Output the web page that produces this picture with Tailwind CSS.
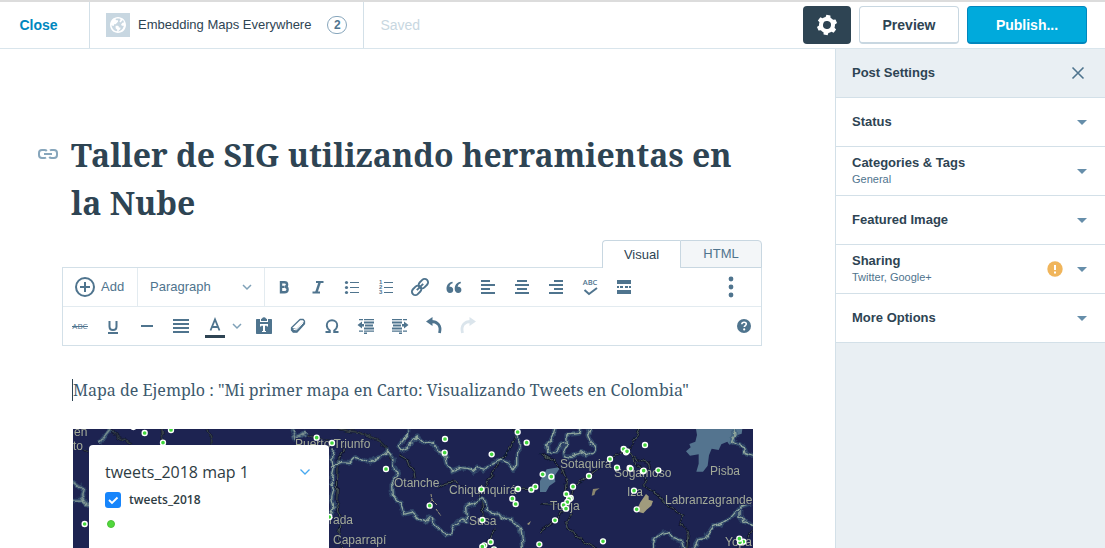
<!DOCTYPE html>
<html lang="es">
<head>
<meta charset="utf-8">
<title>Taller de SIG utilizando herramientas en la Nube</title>
<script src="https://cdn.jsdelivr.net/npm/@tailwindcss/browser@4"></script>
</head>
<body class="flex h-screen flex-col overflow-hidden bg-white font-['Liberation_Sans',Arial,sans-serif] text-[#2e4453]">

<header class="flex h-[49px] shrink-0 items-stretch border-t-2 border-b border-t-[#dcdcdc] border-b-[#d9e5ec]">
  <button class="w-[89px] shrink-0 pr-3 text-sm font-bold text-[#0087be]">Close</button>
  <a href="#" class="flex shrink-0 items-center gap-2 border-x border-[#d3e0e8] px-4 text-[13px]">
    <svg class="size-6 bg-[#c8d7e1]" viewBox="0 0 24 24" aria-hidden="true"><path transform="translate(2.400 2.400) scale(.8)" fill="#fff" d="M12 2C6.477 2 2 6.477 2 12s4.477 10 10 10 10-4.477 10-10S17.523 2 12 2zm0 18l2-2 1-1v-2h-2v-1l-1-1H9v3l2 2v1.930c-3.940-.494-7-3.858-7-7.930l1 1h2v-2h2l3-3V6h-2L9 5v-.410C9.927 4.210 10.940 4 12 4s2.073.212 3 .590V6l-1 1v1l1 1 3.130-3.130a7.980 7.980 0 0 1 1.460 3.130H18l-2 2v1l1 1h2l.286.286C18.030 18.060 15.240 20 12 20z"/></svg>
    <span class="font-medium whitespace-nowrap">Embedding Maps Everywhere</span>
    <span class="ml-2 flex h-[18px] w-5 items-center justify-center rounded-full border border-[#87a6bc] text-xs font-bold text-[#4f748e]">2</span>
  </a>
  <span class="flex items-center pl-4 text-sm font-medium text-[#c8d7e1]">Saved</span>
  <div class="ml-auto flex items-center gap-2 pr-[18px]">
    <button aria-label="Settings" class="flex h-[38px] w-12 items-center justify-center rounded-[4px] bg-[#2e4453] text-white"><svg class="size-6" viewBox="0 0 24 24" fill="currentColor" aria-hidden="true"><path d="M20 12c0-.568-.06-1.122-.174-1.656l1.834-1.612-2-3.464-2.322.786c-.82-.736-1.787-1.308-2.860-1.657L14 2h-4l-.48 2.396c-1.070.350-2.040.920-2.858 1.657L4.340 5.268l-2 3.464 1.834 1.612C4.060 10.878 4 11.432 4 12s.060 1.122.174 1.656L2.340 15.268l2 3.464 2.322-.786c.820.736 1.787 1.308 2.860 1.657L10 22h4l.480-2.396c1.070-.350 2.038-.920 2.858-1.657l2.322.786 2-3.464-1.834-1.613c.113-.535.174-1.088.174-1.656zm-8 4a4 4 0 1 1 0-8 4 4 0 0 1 0 8z" transform="rotate(8 12 12)"/></svg></button>
    <button class="h-[38px] w-[100px] rounded-[4px] border border-b-2 border-[#c8d7e1] bg-white text-sm font-bold">Preview</button>
    <button class="h-[38px] w-[120px] rounded-[4px] border border-b-2 border-[#0087be] bg-[#00aadc] text-sm font-bold text-white">Publish...</button>
  </div>
</header>

<div class="flex min-h-0 flex-1">
  <main class="min-w-0 flex-1 overflow-hidden pr-[11px]">
    <div class="mx-auto w-full max-w-[700px] pt-[82px]">

      <div class="relative pl-[9px]">
        <a href="#" aria-label="Permalink" class="absolute top-[11px] -left-[26px] text-[#87a6bc]"><svg class="size-6" viewBox="0 0 24 24" fill="none" stroke="currentColor" stroke-width="2" aria-hidden="true"><path d="M10 15.500c-.5.400-1 .5-1.500.5H6a3 3 0 0 1-3-3v-2a3 3 0 0 1 3-3h2.500c1 0 1.800.4 2.300 1M14 8.500c.5-.4 1-.5 1.500-.5H18a3 3 0 0 1 3 3v2a3 3 0 0 1-3 3h-2.500c-1 0-1.800-.4-2.300-1M8 12h8"/></svg></a>
        <textarea rows="2" aria-label="Title" class="block w-full resize-none overflow-hidden font-['Noto_Serif','Liberation_Serif',serif] text-[32px] leading-[48px] font-bold">Taller de SIG utilizando herramientas en la Nube</textarea>
      </div>

      <div class="relative z-10 mt-[13px] -mb-px flex justify-end text-[13px]">
        <button class="h-7 w-[78px] rounded-tl-[4px] border border-r-0 border-b-0 border-[#c8d7e1] bg-white">Visual</button>
        <button class="h-7 w-[82px] rounded-tr-[4px] border border-[#c8d7e1] bg-[#f3f6f8] text-[#4f748e]">HTML</button>
      </div>

      <div class="border border-[#d3e0e8] text-[#4f748e]">
        <div class="flex h-[39px] items-stretch border-b border-[#e3ebf0] text-[13px]">
          <button class="flex w-[75px] items-center gap-1 border-r border-[#e3ebf0] pl-[10px]"><svg class="size-6" viewBox="0 0 24 24" fill="none" stroke="currentColor" stroke-width="2" aria-hidden="true"><circle cx="12" cy="12" r="9"/><path d="M12 7v10M7 12h10"/></svg>Add</button>
          <div class="relative mr-[2px] w-[127px] border-r border-[#e3ebf0]">
            <select aria-label="Format" class="h-full w-full appearance-none pl-3"><option>Paragraph</option></select>
            <svg class="pointer-events-none absolute top-[14px] right-3 h-[10px] w-[10px]" viewBox="0 0 10 10" fill="none" stroke="#7fa1b8" stroke-width="1.500" aria-hidden="true"><path d="M1 3l4 4 4-4"/></svg>
          </div>
          <button aria-label="Bold" class="flex w-[34px] items-center justify-center"><svg class="size-5" viewBox="0 0 20 20" aria-hidden="true"><path d="M7 5.200h3.300c1.800 0 2.800.8 2.800 2.200 0 1.300-.8 2.200-2.200 2.300 1.700.1 2.700 1.100 2.700 2.700 0 1.800-1.200 2.900-3.300 2.900H7z M7 9.900h3.500" fill="none" stroke="currentColor" stroke-width="2.400"/></svg></button>
          <button aria-label="Italic" class="flex w-[34px] items-center justify-center"><svg class="size-5" viewBox="0 0 20 20" fill="none" stroke="currentColor" aria-hidden="true"><path d="M8 5h7.500M4.500 15.500H12" stroke-width="1.800"/><path d="M11.800 5L8.300 15.500" stroke-width="2.400"/></svg></button>
          <button aria-label="Bulleted list" class="flex w-[34px] items-center justify-center"><svg class="size-5" viewBox="0 0 20 20" fill="currentColor" aria-hidden="true"><circle cx="4.500" cy="5.500" r="1.600"/><circle cx="4.500" cy="10.500" r="1.600"/><circle cx="4.500" cy="15.500" r="1.600"/><path d="M8 5h9v1H8zM8 10h9v1H8zM8 15h9v1H8z"/></svg></button>
          <button aria-label="Numbered list" class="flex w-[34px] items-center justify-center"><svg class="size-5" viewBox="0 0 20 20" fill="currentColor" aria-hidden="true"><path d="M8 5h9v1H8zM8 10h9v1H8zM8 15h9v1H8z"/><g font-size="6" font-family="Liberation Sans" font-weight="700"><text x="3" y="7">1</text><text x="3" y="12">2</text><text x="3" y="17">3</text></g></svg></button>
          <button aria-label="Link" class="flex w-[34px] items-center justify-center"><svg class="size-5" viewBox="0 0 20 20" fill="none" stroke="currentColor" stroke-width="1.900" aria-hidden="true"><g transform="rotate(-45 10 10)"><rect x="0" y="6.600" width="10.500" height="6.800" rx="3.400"/><rect x="9.500" y="6.600" width="10.500" height="6.800" rx="3.400"/><path d="M5.500 10h9"/></g></svg></button>
          <button aria-label="Quote" class="flex w-[34px] items-center justify-center"><svg class="size-5" viewBox="0 0 20 20" fill="currentColor" aria-hidden="true"><path d="M8.500 4.800c-3.800.7-6 3.200-6 7 0 2.600 1.300 4.200 3.500 4.200 1.900 0 3.200-1.300 3.200-3.100S8 9.900 6.400 9.800c-.3 0-.6 0-.9.100.2-1.900 1.200-2.900 3.200-3.600zM16.700 4.800c-3.800.7-6 3.200-6 7 0 2.600 1.300 4.200 3.500 4.200 1.900 0 3.200-1.300 3.200-3.100s-1.200-3-2.800-3.100c-.3 0-.6 0-.9.100.2-1.900 1.200-2.900 3.200-3.600z"/></svg></button>
          <button aria-label="Align left" class="flex w-[34px] items-center justify-center"><svg class="size-5" viewBox="0 0 20 20" fill="currentColor" aria-hidden="true"><path d="M3 3h9v2H3zM3 7h14v2H3zM3 11h9v2H3zM3 15h14v2H3z"/></svg></button>
          <button aria-label="Align center" class="flex w-[34px] items-center justify-center"><svg class="size-5" viewBox="0 0 20 20" fill="currentColor" aria-hidden="true"><path d="M5 3h10v2H5zM3 7h14v2H3zM5 11h10v2H5zM3 15h14v2H3z"/></svg></button>
          <button aria-label="Align right" class="flex w-[34px] items-center justify-center"><svg class="size-5" viewBox="0 0 20 20" fill="currentColor" aria-hidden="true"><path d="M8 3h9v2H8zM3 7h14v2H3zM8 11h9v2H8zM3 15h14v2H3z"/></svg></button>
          <button aria-label="Proofread" class="flex w-[34px] items-center justify-center"><svg class="size-5" viewBox="0 0 20 20" fill="currentColor" aria-hidden="true"><text x="10" y="8" text-anchor="middle" font-size="7.500" font-family="Open Sans" font-weight="600">ABC</text><path d="M4.500 13l4.500 4 8-6" fill="none" stroke="currentColor" stroke-width="2"/></svg></button>
          <button aria-label="Read more" class="flex w-[34px] items-center justify-center"><svg class="size-5" viewBox="0 0 20 20" fill="currentColor" aria-hidden="true"><path d="M3 3h14v4H3zM3 13h14v4H3zM3 9h2v2H3zM6 9h3v2H6zM11 9h3v2h-3zM15 9h2v2h-2z"/></svg></button>
          <button aria-label="Advanced" class="ml-auto mr-[13px] flex w-[34px] items-center justify-center"><svg class="size-6" viewBox="0 0 24 24" fill="currentColor" aria-hidden="true"><circle cx="12" cy="4" r="2.400"/><circle cx="12" cy="12" r="2.400"/><circle cx="12" cy="20" r="2.400"/></svg></button>
        </div>
        <div class="flex h-[38px] items-stretch">
          <button aria-label="Strikethrough" class="flex w-[33px] items-center justify-center"><svg class="size-5" viewBox="0 0 20 20" fill="currentColor" aria-hidden="true"><text x="10" y="13" text-anchor="middle" font-size="8" font-family="Open Sans">ABC</text><path d="M2 10h16v1H2z"/></svg></button>
          <button aria-label="Underline" class="flex w-[34px] items-center justify-center"><svg class="size-5" viewBox="0 0 20 20" fill="none" stroke="currentColor" stroke-width="2" aria-hidden="true"><path d="M6.500 5v5.500c0 2.400 1.200 3.500 3.500 3.500s3.500-1.100 3.500-3.500V5M5 17h10"/></svg></button>
          <button aria-label="Horizontal line" class="flex w-[34px] items-center justify-center"><svg class="size-5" viewBox="0 0 20 20" fill="currentColor" aria-hidden="true"><path d="M4 9h12v2H4z"/></svg></button>
          <button aria-label="Justify" class="flex w-[34px] items-center justify-center"><svg class="size-5" viewBox="0 0 20 20" fill="currentColor" aria-hidden="true"><path d="M2 3h16v2H2zM2 7h16v2H2zM2 11h16v2H2zM2 15h16v2H2z"/></svg></button>
          <button aria-label="Text color" class="flex w-[34px] items-center justify-center"><svg class="h-6 w-5" viewBox="0 0 20 24" aria-hidden="true"><path d="M5.500 16.500L10 5.500l4.500 11M7 13h6" fill="none" stroke="currentColor" stroke-width="1.800"/><path d="M0 21h20v3H0z" fill="#2e4453"/></svg></button>
          <button aria-label="Choose text color" class="flex w-[15px] items-center justify-start"><svg class="h-[10px] w-[10px]" viewBox="0 0 10 10" fill="none" stroke="#7fa1b8" stroke-width="1.500" aria-hidden="true"><path d="M1 3l4 4 4-4"/></svg></button>
          <button aria-label="Paste as text" class="flex w-[34px] items-center justify-center"><svg class="size-5" viewBox="0 0 20 20" fill="currentColor" aria-hidden="true"><path fill-rule="evenodd" d="M3 3h3v3h8V3h3c.7 0 1 .3 1 1v13c0 .7-.3 1-1 1H3c-.7 0-1-.3-1-1V4c0-.7.300-1 1-1zm3 5v2.500h1.200V9.800H9V15H8v1h4v-1h-1V9.800h1.800v.7H14V8z"/><path d="M7 3c1.300 0 1-1.800 3-1.800S11.700 3 13 3v2H7z"/></svg></button>
          <button aria-label="Clear formatting" class="flex w-[34px] items-center justify-center"><svg class="size-5" viewBox="0 0 20 20" fill="none" stroke="currentColor" stroke-width="1.300" stroke-linejoin="round" aria-hidden="true"><path d="M12 3.500h3.200l1.300 1.700v2.600L8.800 16.200H5.200l-1.700-2v-2.500z"/><path d="M3.500 11.700l5 1.200 8-8v2.900l-7.700 8.400H5.200l-1.700-2z" fill="currentColor" stroke="none"/><path d="M5.500 13.300l3 .6 6.700-7.200" stroke="#fff" stroke-width="1"/></svg></button>
          <button aria-label="Special character" class="flex w-[34px] items-center justify-center"><svg class="size-5" viewBox="0 0 20 20" fill="none" stroke="currentColor" stroke-width="1.900" aria-hidden="true"><path d="M3.500 16h4.300v-1.500C6 13.300 4.800 11.500 4.800 9.300 4.800 6.300 7 4.300 10 4.300s5.200 2 5.200 5c0 2.200-1.200 4-3 5.200V16h4.300"/></svg></button>
          <button aria-label="Decrease indent" class="flex w-[34px] items-center justify-center"><svg class="size-5" viewBox="0 0 20 20" fill="currentColor" aria-hidden="true"><path d="M3 3h4v1.300H3zM8 3h10v1.300H8zM8 5.500h10v2H8zM9 8.500h8v2H9zM8 11.500h10v2H8zM3 14.500h4v1.300H3zM8 14.500h10v1.300H8zM8 16.500h3V18H8zM1.500 9L6 5.500V8h2v2.500H6v2z"/></svg></button>
          <button aria-label="Increase indent" class="flex w-[34px] items-center justify-center"><svg class="size-5" viewBox="0 0 20 20" fill="currentColor" aria-hidden="true"><path d="M2 3h10v1.300H2zM13 3h4v1.300h-4zM2 5.500h10v2H2zM3 8.500h8v2H3zM2 11.500h10v2H2zM2 14.500h10v1.300H2zM13 14.500h4v1.300h-4zM9 16.500h3V18H9zM18.500 9L14 5.500V8h-2v2.500h2v2z"/></svg></button>
          <button aria-label="Undo" class="flex w-[34px] items-center justify-center"><svg class="size-5" viewBox="0 0 20 20" aria-hidden="true"><path d="M8.500 1v9L2 5.500z" fill="currentColor"/><path d="M7 5.500c6.500 0 10.500 4 8.500 11.500" fill="none" stroke="currentColor" stroke-width="2.800"/></svg></button>
          <button aria-label="Redo" class="flex w-[34px] items-center justify-center text-[#dbe5ec]"><svg class="size-5" viewBox="0 0 20 20" aria-hidden="true"><path d="M11.500 1v9L18 5.500z" fill="currentColor"/><path d="M13 5.500C6.500 5.500 2.500 9.500 4.500 17" fill="none" stroke="currentColor" stroke-width="2.800"/></svg></button>
          <button aria-label="Help" class="ml-auto flex w-[34px] items-center justify-center"><svg class="size-5" viewBox="0 0 20 20" aria-hidden="true"><circle cx="10" cy="10" r="7" fill="currentColor"/><path d="M7.800 8.300c.1-1.300 1-2 2.300-2s2.200.7 2.200 1.800c0 1.500-2 1.500-2 3" fill="none" stroke="#fff" stroke-width="1.600"/><circle cx="10.200" cy="13.400" r="1.100" fill="#fff"/></svg></button>
        </div>
      </div>

      <div class="pt-[33px] pr-[9px] pl-[11px]">
        <p class="-ml-px border-l border-[#2e4453] font-['Noto_Serif','Liberation_Serif',serif] text-base leading-[22px] text-[#3d596d]">Mapa de Ejemplo : "Mi primer mapa en Carto: Visualizando Tweets en Colombia"</p>
        <div class="relative mt-7 h-[240px] overflow-hidden bg-[#1d2351]">
          <svg class="absolute top-0 left-0 h-[240px] w-[680px]" viewBox="0 0 680 240" role="img" aria-label="Mapa de tweets en Colombia" fill="none" stroke-linejoin="round">
            <defs>
              <circle id="p" r="7.500" fill="#41d63c" stroke="#fff" stroke-width="4"/>
              <filter id="rugged" filterUnits="userSpaceOnUse" x="0" y="0" width="680" height="240"><feTurbulence type="fractalNoise" baseFrequency=".13" numOctaves="2" seed="4"/><feDisplacementMap in="SourceGraphic" scale="6" xChannelSelector="R" yChannelSelector="G"/></filter>
              <g id="west">
                <path d="M40 335l30 20-5 25 22 30M40 390l30 0 15 12M120 220l10-15 20-25M695 178l10 27 20-8 15-10"/>
              </g>
              <g id="center">
                <path d="M30 125l35-15 25 2 15-15 25 8 20 10 15-15 20-5 20-18 10 13 7 15-4 15 10 20 7 15-20 25 2 30 23 25 12 33 23-6 20 18 20 10 15-15 15 25 30 30 20-5 10-28 20-12 15 5-3-45 23-10 18-13 14 0 8 28 15 15 20 3 20 12 20 5 28 27 5 38 2 25"/>
                <path d="M265 10l-3 20-27 35 7 12 20-9 18-23 12-10 13 13 35 7 12 20 20 10 8 30 15 23 25-11 32 6 8 9 15-14 20 5 17-18 33-10 20 10 15 25 10-20 0-30 10-25 0-20-12-10 5-25"/>
                <path d="M40 70l-5 30 7 30-7 30 7 30-7 30 7 30-12 25"/>
              </g>
              <g id="east">
                <path d="M45 10l-5 25-20 25 5 25 25-5 15-25 15-5M120 10l-5 15-35 5 2 25-12 20 5 20 15 5 15-15 20-5 15 10 25-12 3-13-18-15-7-20 7-20M582 10l3 20-10 20 35 15 5 20 35 12M335 375l10-35 20-15 20-5 15 20 25 10 8 25M458 375l17-30 20-5 25-35 25-10 30-20 28-32 30-8M600 255l0 20 10 15 30 10"/>
              </g>
              <g id="roads">
                <g transform="translate(-13 -59) scale(.33333)"><path d="M150 180l25 20 40 24M305 175l5 42M440 175l15 25 0 22M70 235l15 10M740 195l30 9 46 15M833 175l35 8 32 4 60 28 25 25 10 30"/></g>
                <g transform="translate(247 -4) scale(.33333)"><path d="M78 50l-8 30-16 20 0 40-4 100 10 50-5 55 20 40M238 90l27 15 5 20 12 15 3 20M355 188l20-13 30-5 25 12M575 10l15 20-25 50-25 25-20 40-15 20-20 30-15 40M485 222l5 60M525 310l-15 35-20 30M594 192l40 2"/></g>
                <g transform="translate(467 -4) scale(.33333)"><path d="M300 10l-15 35-20 30-55 27-63 51-42 27-15 40-40 65-50 35M0 85l35 20 30 25 15 35-5 35 10 35 10 30-15 25 5 20 40 35 50 30M0 235l70 5M268 80l17 35 28 22 2 48 35 20 35 40 45 30-10 20 25 25-5 55M275 95l50 20 5 20M590 375l50-60"/></g>
              </g>
              <g id="borders">
                <use href="#west" transform="translate(-13 -59) scale(.33333)"/>
                <use href="#center" transform="translate(247 -4) scale(.33333)"/>
                <use href="#east" transform="translate(467 -4) scale(.33333)"/>
              </g>
            </defs>
            <!-- lakes and parks -->
            <g transform="translate(467 -4) scale(.33333)">
              <path d="M468 12h139l-2 14-24 8 5 14-18 11-6-9-18 8-8 17-21-4-8 20-4 31-14 18h-20l7-24v-28l-26 4-12-13 14-12-4-10 18-7 5-20z" fill="#54748f"/>
              <path d="M0 168l20-35 42-7-18 26 2 18-18 13-10 18H0z" fill="#54748f"/>
              <path d="M318 207l8 7v10l13 4-5 14-14 12-10 11-14-4-2-14 7-15z" fill="#a09b7d"/>
              <path d="M155 212l4-20 20-2-12 8-4 12z" fill="#8b866f"/>
            </g>
            <g filter="url(#rugged)">
              <use href="#roads" stroke="#11162d" stroke-width="8"/>
              <use href="#roads" stroke="#4d5a59" stroke-width="3"/>
              <use href="#borders" stroke="#3b5c78" stroke-width="14" opacity=".6"/>
              <use href="#borders" stroke="#8fa69c" stroke-width="4"/>
            </g>
            <g fill="#a3aa98" stroke="#1d2351" stroke-width="2" paint-order="stroke" font-family="Liberation Sans, Arial, sans-serif" font-size="12">
              <text x="1" y="7">en</text><text x="0" y="21">to</text><text x="222" y="19">Puerto Triunfo</text><text x="321" y="58">Otanche</text><text x="376" y="65">Chiquinquirá</text><text x="487" y="39">Sotaquira</text><text x="541" y="48">Sogamoso</text><text x="637" y="46">Pisba</text><text x="554" y="67">Iza</text><text x="592" y="75">Labranzagrande</text><text x="477" y="81">Tunja</text><text x="396" y="96">Susa</text><text x="256" y="95">rada</text><text x="260" y="115">Caparrapí</text><text x="652" y="117">Yopa</text>
            </g>
            <path d="M358 65l1 6-4 5M359 71l5 5M363 80l5 7" stroke="#a09b7d" stroke-width="1" stroke-dasharray="3 1"/>
            <path d="M454 95l4-3-2 4z" fill="#a09b7d"/>
            <!-- tweet points -->
            <g transform="translate(-13 -59) scale(.33333)"><use href="#p" x="220" y="171"/><use href="#p" x="254" y="189"/><use href="#p" x="333" y="180"/><use href="#p" x="309" y="218"/><use href="#p" x="770" y="203"/><use href="#p" x="816" y="219"/><use href="#p" x="978" y="297"/><use href="#p" x="74" y="462"/><use href="#p" x="808" y="441"/></g>
            <g transform="translate(247 -4) scale(.33333)"><use href="#p" x="375" y="42"/><use href="#p" x="374" y="83"/><use href="#p" x="593" y="21"/><use href="#p" x="620" y="53"/><use href="#p" x="515" y="88"/><use href="#p" x="329" y="242"/><use href="#p" x="484" y="193"/><use href="#p" x="594" y="192"/><use href="#p" x="634" y="194"/><use href="#p" x="646" y="185"/><use href="#p" x="577" y="221"/><use href="#p" x="587" y="237"/><use href="#p" x="487" y="285"/><use href="#p" x="512" y="351"/><use href="#p" x="493" y="361"/><use href="#p" x="487" y="365"/><use href="#p" x="522" y="373"/><use href="#p" x="658" y="358"/></g>
            <g transform="translate(467 -4) scale(.33333)"><use href="#p" x="315" y="60"/><use href="#p" x="251" y="72"/><use href="#p" x="258" y="82"/><use href="#p" x="261" y="79"/><use href="#p" x="210" y="102"/><use href="#p" x="231" y="128"/><use href="#p" x="269" y="129"/><use href="#p" x="272" y="131"/><use href="#p" x="309" y="139"/><use href="#p" x="311" y="137"/><use href="#p" x="355" y="136"/><use href="#p" x="147" y="153"/><use href="#p" x="8" y="148"/><use href="#p" x="34" y="155"/><use href="#p" x="99" y="185"/><use href="#p" x="79" y="207"/><use href="#p" x="92" y="219"/><use href="#p" x="87" y="222"/><use href="#p" x="82" y="231"/><use href="#p" x="71" y="240"/><use href="#p" x="78" y="251"/><use href="#p" x="45" y="286"/><use href="#p" x="282" y="197"/><use href="#p" x="290" y="253"/><use href="#p" x="189" y="349"/><use href="#p" x="610" y="350"/><use href="#p" x="600" y="352"/><use href="#p" x="598" y="341"/></g>
          </svg>
          <section class="absolute top-4 left-4 h-[220px] w-[240px] rounded-[4px] bg-white px-4 pt-4 font-['Open_Sans',sans-serif] text-[#2e3c43]">
            <div class="flex items-center justify-between">
              <h2 class="text-base leading-[22px]">tweets_2018 map 1</h2>
              <button aria-label="Collapse legend" class="mr-[3px]"><svg class="size-[10px]" viewBox="0 0 10 10" fill="none" stroke="#47a9f0" stroke-width="1.300" aria-hidden="true"><path d="M.5 2.500L5 7l4.500-4.500"/></svg></button>
            </div>
            <label class="relative mt-[9px] flex h-4 items-center gap-2 text-xs font-semibold">
              <input type="checkbox" checked class="size-4 appearance-none rounded-[3px] bg-[#1785fb]">
              <svg class="pointer-events-none absolute top-0 left-0 size-4" viewBox="0 0 16 16" fill="none" stroke="#fff" stroke-width="1.800" aria-hidden="true"><path d="M4 8l3 3 5.500-5.500"/></svg>
              tweets_2018
            </label>
            <div class="mt-3 ml-[2px] size-2 rounded-full border border-[#4cc036] bg-[#50d83c]"></div>
          </section>
        </div>
      </div>
    </div>
  </main>

  <aside class="w-[270px] shrink-0 border-l border-[#d3e0e8] bg-[#e9eff3] text-[13px] font-bold">
    <div class="flex h-[49px] items-center justify-between border-b border-[#d3e0e8] pr-5 pl-4">
      <h2>Post Settings</h2>
      <button aria-label="Close settings"><svg class="size-[14px]" viewBox="0 0 14 14" fill="none" stroke="#4f748e" stroke-width="1.600" aria-hidden="true"><path d="M1.500 1.500l11 11M12.500 1.500l-11 11"/></svg></button>
    </div>
    <button class="flex h-[49px] w-full items-center justify-between border-b border-[#d3e0e8] bg-white pr-[18px] pl-4 text-left">Status<svg class="h-[5px] w-[10px]" viewBox="0 0 10 5" fill="#668eaa" aria-hidden="true"><path d="M0 0h10L5 5z"/></svg></button>
    <button class="flex h-[49px] w-full items-center justify-between border-b border-[#d3e0e8] bg-white pr-[18px] pl-4 text-left"><span class="leading-4">Categories &amp; Tags<span class="block text-[11px] font-normal text-[#4f748e]">General</span></span><svg class="h-[5px] w-[10px]" viewBox="0 0 10 5" fill="#668eaa" aria-hidden="true"><path d="M0 0h10L5 5z"/></svg></button>
    <button class="flex h-[49px] w-full items-center justify-between border-b border-[#d3e0e8] bg-white pr-[18px] pl-4 text-left">Featured Image<svg class="h-[5px] w-[10px]" viewBox="0 0 10 5" fill="#668eaa" aria-hidden="true"><path d="M0 0h10L5 5z"/></svg></button>
    <button class="flex h-[49px] w-full items-center border-b border-[#d3e0e8] bg-white pr-[18px] pl-4 text-left"><span class="leading-4">Sharing<span class="block text-[11px] font-normal text-[#4f748e]">Twitter, Google+</span></span><svg class="mr-[14px] ml-auto size-4" viewBox="0 0 16 16" aria-hidden="true"><circle cx="8" cy="8" r="7.700" fill="#f0b55b"/><path d="M7 4h2v5H7zM7 10.500h2v2H7z" fill="#fff"/></svg><svg class="h-[5px] w-[10px]" viewBox="0 0 10 5" fill="#668eaa" aria-hidden="true"><path d="M0 0h10L5 5z"/></svg></button>
    <button class="flex h-[49px] w-full items-center justify-between border-b border-[#d3e0e8] bg-white pr-[18px] pl-4 text-left">More Options<svg class="h-[5px] w-[10px]" viewBox="0 0 10 5" fill="#668eaa" aria-hidden="true"><path d="M0 0h10L5 5z"/></svg></button>
  </aside>
</div>
</body>
</html>
